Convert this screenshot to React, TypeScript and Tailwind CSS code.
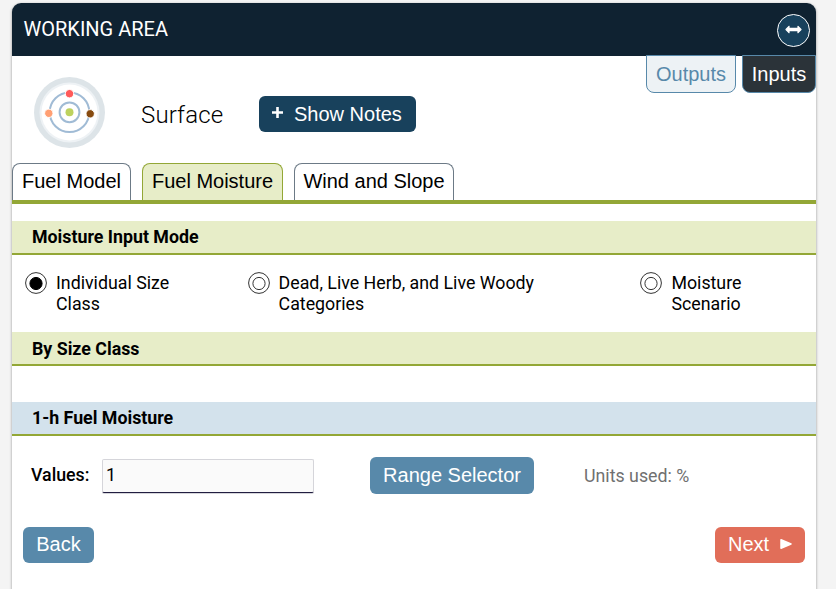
import React from "react";

const arial = "font-['Liberation_Sans',Arial,sans-serif]";

function SurfaceLogo() {
  return (
    <svg className="h-[71px] w-[71px] shrink-0" viewBox="0 0 71 71">
      <circle cx="35.5" cy="35.5" r="35.5" fill="#dde4e8" />
      <circle cx="35.5" cy="35.5" r="30" fill="#eef2f5" />
      <circle cx="35.5" cy="35.5" r="28" fill="#ffffff" />
      <circle cx="35.5" cy="35.3" r="19.8" fill="none" stroke="#a0bbd5" strokeWidth="2" />
      <circle cx="35.5" cy="35.3" r="9.9" fill="none" stroke="#a0bbd5" strokeWidth="2" />
      <g stroke="#ffffff" strokeWidth="1">
        <circle cx="35.5" cy="16.7" r="4.2" fill="#ff5a5a" />
        <circle cx="14.8" cy="36.3" r="4.2" fill="#ff9f73" />
        <circle cx="56.2" cy="36.8" r="4.2" fill="#874b10" />
      </g>
      <circle cx="35.5" cy="35.3" r="4" fill="#bdd25f" />
    </svg>
  );
}

function SectionBar({ title, blue = false, low = false }: { title: string; blue?: boolean; low?: boolean }) {
  return (
    <div
      className={`h-[34px] shrink-0 border-b-2 border-[#93a736] pl-5 text-[17.8px] font-bold ${
        low ? "leading-[34px]" : "leading-[32px]"
      } ${blue ? "bg-[#d3e2ec]" : "bg-[#e7edc8]"}`}
    >
      {title}
    </div>
  );
}

function Radio({ lines, checked = false }: { lines: string[]; checked?: boolean }) {
  return (
    <label className="flex items-start gap-[9px] text-[17.8px] leading-[21px]">
      <svg className="h-[22px] w-[22px] shrink-0" viewBox="0 0 22 22">
        <circle cx="11" cy="11" r="10.4" fill="#fff" stroke="#333" strokeWidth="1" />
        <circle cx="11" cy="11.5" r="6.1" fill={checked ? "#000" : "#fff"} stroke={checked ? "#000" : "#333"} strokeWidth="1" />
      </svg>
      <span>
        {lines.map((line) => (
          <span key={line} className="block whitespace-nowrap">
            {line}
          </span>
        ))}
      </span>
    </label>
  );
}

export default function App() {
  return (
    <div className="h-[589px] overflow-hidden bg-[#f4f4f4] pt-[3px] pl-3 font-['Roboto',sans-serif] text-black">
      <div className="flex h-[600px] w-[804px] flex-col rounded-t-[9px] bg-white shadow-[0_1px_3px_rgba(0,0,0,0.4)]">
        <header className="flex h-[53px] shrink-0 items-center justify-between rounded-t-[9px] bg-[#0f2231] pr-[6px] pl-[11.5px]">
          <h1 className="pb-[2px] text-[20px] leading-none text-white">WORKING AREA</h1>
          <button className="mt-px flex h-[33px] w-[33px] items-center justify-center rounded-full border border-white bg-[#18415c]">
            <svg className="-mt-px h-[9px] w-[17px]" viewBox="0 0 17 9">
              <path d="M1 4.5 4 1.3v2h9v-2l3 3.2-3 3.2v-2H4v2z" fill="#fff" stroke="#fff" strokeLinejoin="round" strokeWidth="1.2" />
            </svg>
          </button>
        </header>

        <div className="flex h-[107px] shrink-0 items-start pl-[22px]">
          <div className="flex pt-[21px]">
            <SurfaceLogo />
            <div className="ml-9 w-[118px] pt-[22px] text-[24px] leading-8 font-light tracking-[0.15px]">Surface</div>
            <button className={`mt-[19px] flex h-9 w-[157px] items-center rounded-[6px] bg-[#18415c] pl-[13px] text-[20px] text-white ${arial}`}>
              <svg className="mb-[3px] h-[11px] w-[11px]" viewBox="0 0 11 11">
                <path d="M5.5 0v11M0 5.5h11" stroke="#fff" strokeWidth="2.6" />
              </svg>
              <span className="ml-[11px]">Show Notes</span>
            </button>
          </div>
          <div className={`-mt-px ml-auto flex gap-[6px] text-[20px] leading-[36px] ${arial}`}>
            <button className="h-[38px] w-[90px] rounded-b-[8px] border border-[#5889aa] bg-[#edf2f5] text-[#5889aa]">Outputs</button>
            <button className="h-[38px] w-[74px] rounded-b-[8px] border border-[#5889aa] bg-[#2b3339] text-white">Inputs</button>
          </div>
        </div>

        <nav className={`flex h-[41px] shrink-0 gap-[11px] border-b-4 border-[#93a736] text-[20px] leading-[33px] ${arial}`}>
          <button className="w-[119px] rounded-t-[8px] border border-b-0 border-[#6c7a86] pb-[2px]">Fuel Model</button>
          <button className="w-[141px] rounded-t-[8px] border border-b-0 border-[#93a736] bg-[#e7edc8] pb-[2px]">Fuel Moisture</button>
          <button className="w-[160px] rounded-t-[8px] border border-b-0 border-[#6c7a86] pb-[2px]">Wind and Slope</button>
        </nav>

        <div className="h-[17px] shrink-0" />
        <SectionBar title="Moisture Input Mode" />
        <div className="grid h-[77px] shrink-0 grid-cols-[222.6px_392.8px_1fr] pt-[17px] pl-[13px]">
          <Radio checked lines={["Individual Size", "Class"]} />
          <Radio lines={["Dead, Live Herb, and Live Woody", "Categories"]} />
          <Radio lines={["Moisture", "Scenario"]} />
        </div>
        <SectionBar title="By Size Class" low />
        <div className="h-9 shrink-0" />
        <SectionBar title="1-h Fuel Moisture" blue />

        <div className="flex h-[91px] shrink-0 items-start pt-[21px] pl-[19px]">
          <label className="w-[71px] pt-[7px] text-[17.8px] leading-[21px] font-medium">Values:</label>
          <input
            defaultValue="1"
            className="mt-[2px] h-[34px] w-[212px] rounded-[2px] border border-[#d5d5da] border-b-[#211d40] bg-[#fafafa] px-[3px] pb-[3px] text-[17.8px] shadow-[0_1px_0_#d5d5da] outline-none"
          />
          <button className={`ml-14 h-[37px] w-[164px] rounded-[6px] bg-[#5889aa] pb-[2px] text-[20px] text-white ${arial}`}>Range Selector</button>
          <div className="ml-[50px] pt-[8px] text-[17.8px] leading-[21px] text-[#707070]">Units used: %</div>
        </div>

        <div className={`flex justify-between pr-[11px] pl-[11px] text-[20px] leading-[34px] text-white ${arial}`}>
          <button className="h-9 w-[71px] rounded-[6px] bg-[#5889aa] pb-[2px]">Back</button>
          <button className="flex h-9 w-[90px] items-center rounded-[6px] bg-[#e16e59] pl-[13px]">
            <span className="pb-[2px]">Next</span>
            <svg className="mb-[2px] ml-[11px] h-[10px] w-[12px]" viewBox="0 0 12 10">
              <path d="M1 .8 11 5 1 9.2z" fill="#fff" stroke="#fff" strokeLinejoin="round" strokeWidth="1.5" />
            </svg>
          </button>
        </div>
      </div>
    </div>
  );
}
